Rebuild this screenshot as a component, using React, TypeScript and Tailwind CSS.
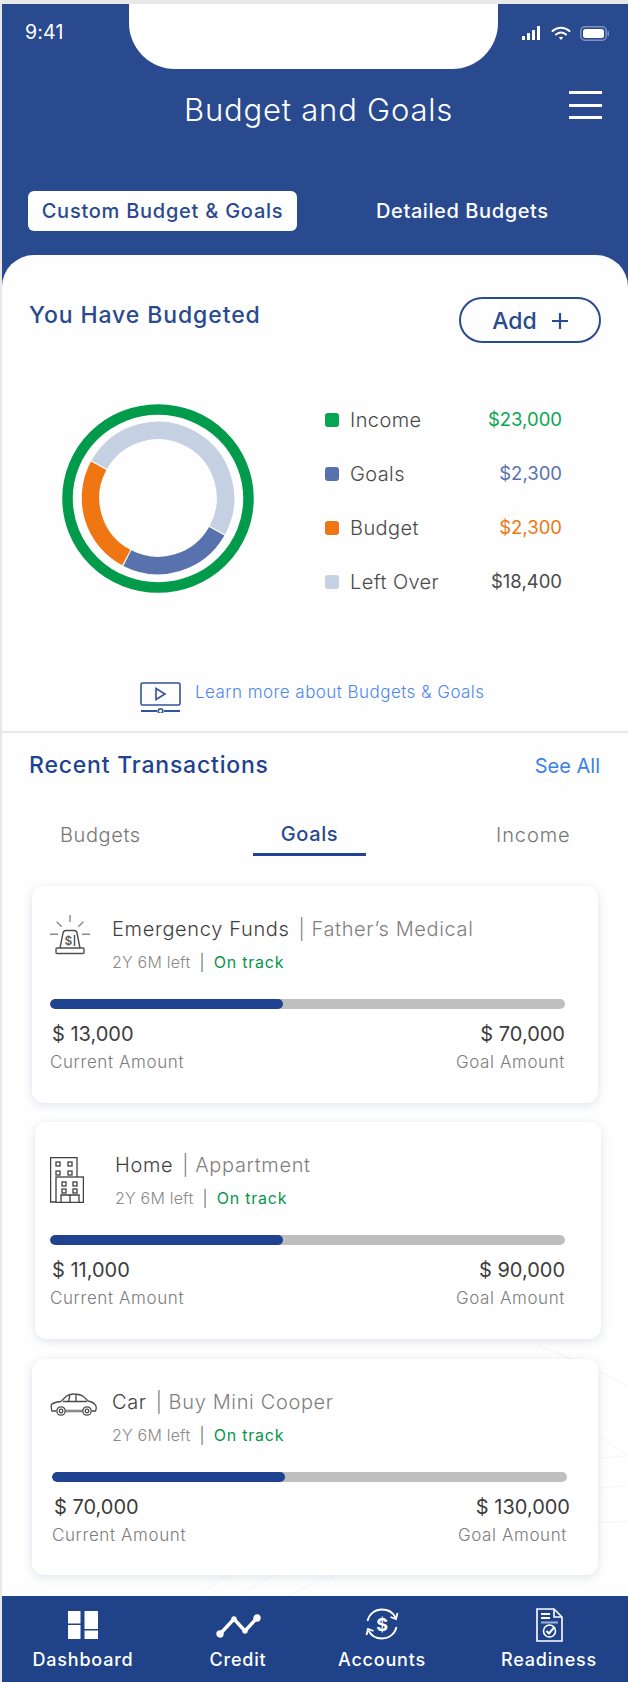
import React from 'react';

const font = { fontFamily: 'Inter, "Liberation Sans", sans-serif' };

function StatusIcons() {
  return (
    <div className="flex items-center gap-[9px] pr-[19px] pt-[2px]">
      <svg width="20" height="14" viewBox="0 0 20 14" fill="#fff">
        <rect x="0" y="10" width="3" height="4" rx="0.5" />
        <rect x="5" y="7" width="3" height="7" rx="0.5" />
        <rect x="10" y="4" width="3" height="10" rx="0.5" />
        <rect x="15" y="0" width="3" height="14" rx="0.5" />
      </svg>
      <svg width="20" height="15" viewBox="0 0 20 15" fill="none" stroke="#fff" strokeWidth="2" strokeLinecap="round">
        <path d="M1.5 5 C6.5 0.5 13.5 0.5 18.5 5" />
        <path d="M5 8.5 C8 6 12 6 15 8.5" />
        <path d="M10 14 L7.8 11.3 C9 10.4 11 10.4 12.2 11.3 Z" fill="#fff" stroke="none" />
      </svg>
      <svg width="29" height="15" viewBox="0 0 29 15" fill="none">
        <rect x="0.75" y="0.75" width="25.5" height="13.5" rx="4" stroke="#7f93bd" strokeWidth="1.5" />
        <rect x="3" y="3" width="21" height="9" rx="2.5" fill="#fff" />
        <rect x="27.5" y="5" width="1.5" height="5" rx="0.7" fill="#7f93bd" />
      </svg>
    </div>
  );
}

function Donut() {
  // ring segments, angles clockwise from 12 o'clock
  const polar = (r: number, a: number) => {
    const t = ((a - 90) * Math.PI) / 180;
    return `${96 + r * Math.cos(t)} ${94 + r * Math.sin(t)}`;
  };
  const seg = (a0: number, a1: number) => {
    const large = a1 - a0 > 180 ? 1 : 0;
    return `M ${polar(67.5, a0)} A 67.5 67.5 0 ${large} 1 ${polar(67.5, a1)}`;
  };
  return (
    <svg width="192" height="189" viewBox="0 0 192 189" fill="none" className="shrink-0">
      <ellipse cx="96" cy="94.5" rx="90.5" ry="89" stroke="#029a4b" strokeWidth="10.5" />
      <path d={seg(-60.5, 118.5)} stroke="#c5d0e3" strokeWidth="17.5" />
      <path d={seg(119.5, 207)} stroke="#5872ad" strokeWidth="17.5" />
      <path d={seg(208, 298.5)} stroke="#ef7612" strokeWidth="17.5" />
    </svg>
  );
}

function LegendRow({ dot, label, value, color }: { dot: string; label: string; value: string; color: string }) {
  return (
    <div className="flex items-center h-[28px] w-[237px]">
      <span className={`w-[14px] h-[14px] rounded-[3px] ${dot}`} />
      <span className="ml-[11px] text-[20px] tracking-[0.4px] text-[#4a4a4a] font-light">{label}</span>
      <span className={`ml-auto text-[18.5px] ${color}`}>{value}</span>
    </div>
  );
}

function SirenIcon() {
  return (
    <svg width="40" height="40" viewBox="0 0 40 40" fill="none" stroke="#4f4f4f" strokeWidth="1.4">
      <path d="M20 0 V7 M6.7 6.7 L11.7 11.7 M33.3 6.7 L28.3 11.7 M0 19.3 H8 M32 19.3 H40" stroke="#8a8a8a" />
      <path d="M10 33 L13 18 Q13.5 15.5 16 15.5 H24 Q26.5 15.5 27 18 L30 33" />
      <rect x="6" y="33" width="28" height="5.5" rx="1" />
      <text x="14.5" y="30" fontSize="12" fill="#5d5d5d" stroke="none" fontWeight="600">$</text>
      <path d="M24.5 20 V31" />
    </svg>
  );
}

function BuildingIcon() {
  return (
    <svg width="34" height="46" viewBox="0 0 34 46" fill="none" stroke="#404040" strokeWidth="1.3" className="mt-[6px]">
      <path d="M6 45 H0.6 V0.6 H27 V20" />
      <rect x="6" y="20" width="27.4" height="25.4" />
      <rect x="6" y="5" width="4" height="4" />
      <rect x="18" y="5" width="4" height="4" />
      <rect x="6" y="14" width="4" height="4" />
      <rect x="18" y="14" width="4" height="4" />
      <rect x="12" y="25" width="4" height="4" />
      <rect x="23" y="25" width="4" height="4" />
      <rect x="12" y="32" width="4" height="4" />
      <rect x="23" y="32" width="4" height="4" />
      <path d="M11 45 V38 H29 V45 M20 38 V45" />
    </svg>
  );
}

function CarIcon() {
  return (
    <svg width="47" height="23" viewBox="0 0 47 23" fill="none" stroke="#4a4a4a" strokeWidth="1.3" className="mt-[5px] -ml-[2px]">
      <path d="M6 18 H2 Q0.8 15 1.5 11.5 Q3 9.5 11 8.5 L16 3.5 Q19 0.8 24 1 Q30 1 34 4 L38 8 Q44 9 46 13 Q46.5 16 45.5 18 H42" />
      <path d="M15.5 18 H32.5" strokeWidth="2.6" stroke="#8a8a8a" />
      <path d="M13 8.5 H37 M20 1.5 L18.5 8.5 M26 1.5 L26 8.5" />
      <circle cx="11" cy="18" r="4.2" />
      <circle cx="11" cy="18" r="1.8" />
      <circle cx="37" cy="18" r="4.2" />
      <circle cx="37" cy="18" r="1.8" />
    </svg>
  );
}

function GoalCard(props: {
  className: string;
  icon: React.ReactNode;
  iconWidth: string;
  name: string;
  detail: string;
  current: string;
  goal: string;
  goalOffset?: string;
}) {
  return (
    <div className={`w-[566px] bg-white rounded-[12px] shadow-[0_2px_10px_rgba(60,80,140,0.16)] relative ${props.className}`}>
      <div className="flex items-start pt-[29px]">
        <div className={`shrink-0 ${props.iconWidth}`}>{props.icon}</div>
        <div className="pt-[1px]">
          <div className="h-[26px] flex items-center text-[20px] tracking-[0.65px] leading-none font-light text-[#7f7f7f] whitespace-nowrap">
            <span className="text-[#3f3f3f]">{props.name}</span>
            <span className="ml-[9px] mr-[6px]">|</span>
            <span>{props.detail}</span>
          </div>
          <div className="mt-[8px] h-[24px] flex items-center text-[16px] tracking-[0.2px] font-light text-[#8a8a8a] whitespace-nowrap">
            <span>2Y 6M left</span>
            <span className="mx-[9px] text-[#555]">|</span>
            <span className="text-[#07964a] font-normal tracking-[0.8px]">On track</span>
          </div>
        </div>
      </div>
      <div className="mt-[25px] w-[515px] h-[10px] rounded-full bg-[#bfbfbf] overflow-hidden">
        <div className="w-[233px] h-full bg-[#1f4390] rounded-full" />
      </div>
      <div className="mt-[11px] w-[515px] h-[28px] flex items-center justify-between text-[20px] text-[#3d3d3d]">
        <span className="ml-[2px]">{props.current}</span>
        <span className={props.goalOffset}>{props.goal}</span>
      </div>
      <div className="mt-[3px] w-[515px] h-[24px] flex items-center justify-between text-[17px] tracking-[0.6px] font-light text-[#7d7d7d]">
        <span>Current Amount</span>
        <span>Goal Amount</span>
      </div>
    </div>
  );
}

function NavItem({ icon, label, className }: { icon: React.ReactNode; label: string; className: string }) {
  return (
    <div className={`absolute top-0 h-full flex flex-col items-center ${className}`}>
      <div className="h-[46px] flex items-end">{icon}</div>
      <span className="mt-[6px] text-[18px] tracking-[0.8px] leading-[24px] font-medium text-white">{label}</span>
    </div>
  );
}

export default function App() {
  return (
    <div style={font} className="w-[628px] h-[1682px] bg-[#e8e8e8] pt-[4px] pl-[2px] overflow-hidden flex flex-col">
      <div className="bg-[#2a4a8f] flex flex-col flex-1 relative min-h-0">
        {/* notch */}
        <div className="absolute top-0 left-[127px] w-[369px] h-[65px] bg-white rounded-b-[46px]" />

        {/* Status bar */}
        <div className="h-[56px] flex items-center justify-between pl-[23px] relative">
          <span className="pt-[2px] text-[19.5px] tracking-[0.2px] font-normal text-white">9:41</span>
          <StatusIcons />
        </div>

        {/* Title */}
        <div className="h-[40px] mt-[30px] flex items-center pl-[182px] pr-[26px]">
          <h1 className="text-[31px] tracking-[0.8px] font-light text-white whitespace-nowrap">Budget and Goals</h1>
          <div className="ml-auto flex flex-col gap-[9.5px] -mt-[10px]">
            <span className="block w-[33px] h-[3px] bg-white" />
            <span className="block w-[33px] h-[3px] bg-white" />
            <span className="block w-[33px] h-[3px] bg-white" />
          </div>
        </div>

        {/* Tabs */}
        <div className="h-[40px] mt-[61px] flex items-center pl-[26px]">
          <div className="w-[269px] h-full bg-white rounded-[6px] flex items-center justify-center text-[20px] tracking-[0.75px] font-medium text-[#2a4a8f] whitespace-nowrap">
            Custom Budget &amp; Goals
          </div>
          <span className="ml-[79px] text-[20px] tracking-[0.6px] font-medium text-white whitespace-nowrap">Detailed Budgets</span>
        </div>

        {/* White panel */}
        <div className="mt-[24px] flex-1 bg-[#fefefe] rounded-t-[32px] relative overflow-hidden flex flex-col">
          <svg className="absolute right-0 bottom-[86px] pointer-events-none" width="430" height="260" viewBox="0 0 430 260" fill="none" stroke="#f4f5f7" strokeWidth="1">
            <path d="M0 260 C120 170 260 130 430 120" />
            <path d="M40 260 C150 190 280 160 430 150" />
            <path d="M90 260 C190 210 310 190 430 185" />
            <path d="M300 60 C340 70 390 90 430 120" />
            <path d="M340 10 C370 20 400 35 430 50" />
          </svg>

          <div className="relative flex flex-col flex-1">
            {/* You have budgeted */}
            <div className="mt-[42px] h-[46px] flex items-start justify-between pl-[27px] pr-[27px]">
              <h2 className="mt-[2px] text-[23px] tracking-[0.9px] leading-[32px] font-medium text-[#2a4a8f]">You Have Budgeted</h2>
              <button className="w-[142px] h-[46px] rounded-full border-2 border-[#2a4a8f] flex items-center justify-center text-[#2a4a8f] text-[23px] font-medium pt-[2px]">
                Add
                <svg width="16" height="16" viewBox="0 0 16 16" className="ml-[15px]" stroke="#2a4a8f" strokeWidth="2.2">
                  <path d="M8 0 V16 M0 8 H16" />
                </svg>
              </button>
            </div>

            {/* Chart and legend */}
            <div className="mt-[61px] h-[189px] flex items-start pl-[60px]">
              <Donut />
              <div className="ml-[71px] mt-[2px] flex flex-col gap-[26px]">
                <LegendRow dot="bg-[#06a552]" label="Income" value="$23,000" color="text-[#0aa651]" />
                <LegendRow dot="bg-[#5872ad]" label="Goals" value="$2,300" color="text-[#5872ad]" />
                <LegendRow dot="bg-[#ef7612]" label="Budget" value="$2,300" color="text-[#ef7612]" />
                <LegendRow dot="bg-[#c5d0e3]" label="Left Over" value="$18,400" color="text-[#4a4a4a]" />
              </div>
            </div>

            {/* Learn more */}
            <div className="mt-[89px] h-[30px] flex items-start pl-[138px]">
              <svg width="41" height="31" viewBox="0 0 41 31" fill="none" stroke="#33539c" strokeWidth="1.6" className="shrink-0">
                <rect x="1" y="1" width="39" height="22" rx="1.5" />
                <path d="M16 6.5 L25 12 L16 17.5 Z" />
                <path d="M1 29 H17 M24 29 H40" strokeWidth="2" />
                <circle cx="20.5" cy="29" r="2.3" />
              </svg>
              <span className="ml-[14px] text-[17px] tracking-[0.45px] leading-[20px] font-light text-[#4f86f0] whitespace-nowrap">
                Learn more about Budgets &amp; Goals
              </span>
            </div>

            <div className="mt-[19px] h-[2px] bg-[#e8e8e8]" />

            {/* Recent transactions */}
            <div className="mt-[17px] h-[30px] flex items-center justify-between pl-[27px] pr-[28px]">
              <h2 className="text-[23px] tracking-[0.8px] font-medium text-[#1f4390]">Recent Transactions</h2>
              <span className="text-[20px] pt-[2px] text-[#3b82e6]">See All</span>
            </div>

            {/* Goal tabs */}
            <div className="mt-[41px] h-[35px] flex items-start pl-[58px] text-[20px] tracking-[0.6px] font-light text-[#777]">
              <span className="w-[81px] h-[28px] flex items-center">Budgets</span>
              <span className="ml-[112px] w-[113px] h-[35px] pb-[6px] flex items-center justify-center border-b-[3px] border-[#1f4390] font-medium text-[#2a4a8f]">
                Goals
              </span>
              <span className="ml-[130px] h-[28px] flex items-center tracking-[0.9px]">Income</span>
            </div>

            {/* Goal cards */}
            <div className="mt-[30px] flex flex-col">
              <GoalCard
                className="ml-[30px] h-[217px] pl-[18px]"
                icon={<SirenIcon />}
                iconWidth="w-[62px]"
                name="Emergency Funds"
                detail="Father’s Medical"
                current="$ 13,000"
                goal="$ 70,000"
              />
              <GoalCard
                className="ml-[33px] mt-[19px] h-[217px] pl-[15px]"
                icon={<BuildingIcon />}
                iconWidth="w-[65px]"
                name="Home"
                detail="Appartment"
                current="$ 11,000"
                goal="$ 90,000"
              />
              <GoalCard
                className="ml-[30px] mt-[20px] h-[216px] pl-[20px]"
                icon={<CarIcon />}
                iconWidth="w-[60px]"
                name="Car"
                detail="Buy Mini Cooper"
                current="$ 70,000"
                goal="$ 130,000"
                goalOffset="-mr-[3px]"
              />
            </div>

            {/* Bottom nav */}
            <div className="mt-auto h-[86px] bg-[#1f4288] relative">
              <NavItem
                className="left-[30px] w-[102px]"
                label="Dashboard"
                icon={
                  <svg width="30" height="28" viewBox="0 0 30 28" fill="#fff" className="mb-[3px]">
                    <rect x="0" y="0" width="12.5" height="12.5" />
                    <rect x="0" y="14" width="12.5" height="14" />
                    <rect x="16.5" y="0" width="13.5" height="18" />
                    <rect x="16.5" y="19.5" width="13.5" height="8.5" />
                  </svg>
                }
              />
              <NavItem
                className="left-[186px] w-[100px]"
                label="Credit"
                icon={
                  <svg width="45" height="26" viewBox="0 0 45 26" fill="#fff" stroke="#fff" strokeWidth="3.4" strokeLinejoin="round" className="mb-[3px]">
                    <path d="M4 21 L18 6 L29 18 L41 5" fill="none" />
                    <circle cx="4" cy="21" r="2" />
                    <circle cx="18" cy="6" r="1" />
                    <circle cx="29" cy="18" r="1" />
                    <circle cx="41" cy="5" r="2" />
                  </svg>
                }
              />
              <NavItem
                className="left-[328px] w-[104px]"
                label="Accounts"
                icon={
                  <svg width="36" height="32" viewBox="0 0 36 32" fill="none" stroke="#fff" strokeWidth="1.8" className="mb-[2px]">
                    <path d="M3.5 13 C5 6 11 1.5 18 1.5 C24 1.5 29 4.5 31.5 9.5" />
                    <path d="M32.5 19 C31 26 25 30.5 18 30.5 C12 30.5 7 27.5 4.5 22.5" />
                    <path d="M33.5 5 L32 11 L26.5 9" />
                    <path d="M2.5 27 L4 21 L9.5 23" />
                    <text x="12.2" y="22.5" fontSize="18" fontWeight="700" fill="#fff" stroke="none">$</text>
                  </svg>
                }
              />
              <NavItem
                className="left-[497px] w-[100px]"
                label="Readiness"
                icon={
                  <svg width="27" height="34" viewBox="0 0 27 34" fill="none" stroke="#fff" strokeWidth="1.6">
                    <path d="M1 1 H18 L26 9 V33 H1 Z" />
                    <path d="M18 1 V9 H26" />
                    <path d="M5 6 H14 M5 10 H14" strokeWidth="1.8" />
                    <path d="M5 14.5 H22" strokeWidth="2" stroke="#9fb2d6" />
                    <circle cx="13.5" cy="23" r="6" />
                    <path d="M10.5 23 L13 25.5 L18.5 19" strokeWidth="2" />
                  </svg>
                }
              />
            </div>
          </div>
        </div>
      </div>
    </div>
  );
}
